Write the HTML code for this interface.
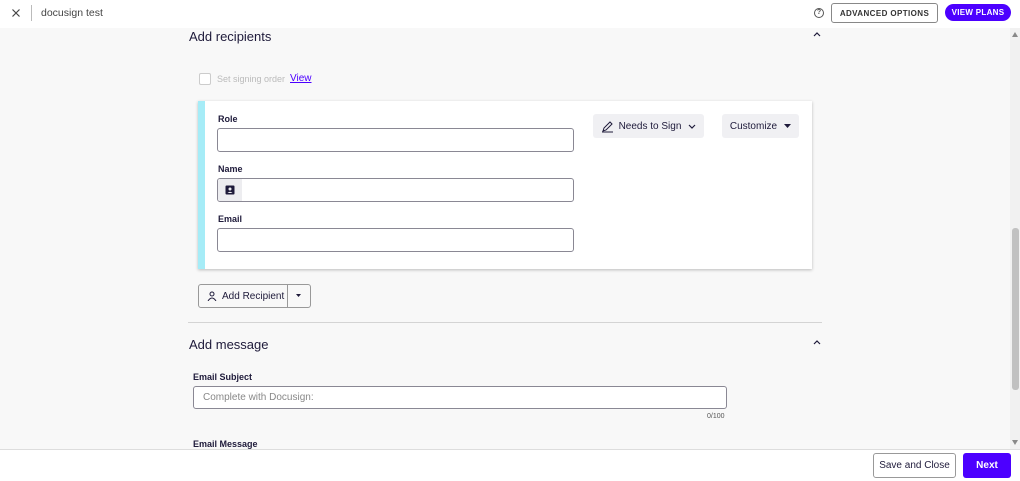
<!DOCTYPE html>
<html><head><meta charset="utf-8"><style>
*{box-sizing:border-box;margin:0;padding:0}
body{width:1020px;height:481px;overflow:hidden;font-family:"Liberation Sans",sans-serif;background:#f8f8f8;color:#1e1a3a;position:relative}
.abs{position:absolute}
.hdr{left:0;top:0;width:1020px;height:28px;background:#fff}
.ftr{left:0;top:449px;width:1020px;height:32px;background:#fff;border-top:1px solid #ddd}
.inp{position:absolute;background:#fff;border:1px solid #8a8894;border-radius:3px}
.lbl{position:absolute;font-size:9px;font-weight:600;color:#1e1a3a}
.btn{position:absolute;border-radius:3px;font-size:10px;display:flex;align-items:center;justify-content:center}
</style></head><body>
<div class="abs hdr"></div>
<svg class="abs" style="left:12px;top:9px" width="8" height="8" viewBox="0 0 8 8"><path d="M0.5 0.5 L7.5 7.5 M7.5 0.5 L0.5 7.5" stroke="#444" stroke-width="1.2"/></svg>
<div class="abs" style="left:31px;top:5px;width:1px;height:16px;background:#bbb"></div>
<div class="abs" style="left:41px;top:7px;font-size:10.5px;color:#444">docusign test</div>
<div class="abs" style="left:814px;top:8px;width:10px;height:10px;border:1.5px solid #555;border-radius:50%;font-size:7px;text-align:center;line-height:7px;font-weight:bold;color:#555">?</div>
<div class="btn" style="left:831px;top:3px;width:107px;height:20px;border:1px solid #888;background:#fff;font-size:8px;font-weight:bold;letter-spacing:.4px;color:#333">ADVANCED OPTIONS</div>
<div class="btn" style="left:945px;top:4px;width:66px;height:17px;border-radius:9px;background:#4c00ff;color:#fff;font-size:8px;font-weight:bold;letter-spacing:.3px">VIEW PLANS</div>

<div class="abs" style="left:189px;top:29px;font-size:13px">Add recipients</div>
<svg class="abs" style="left:813px;top:32px" width="8" height="5" viewBox="0 0 8 5"><path d="M1 4 L4 1 L7 4" fill="none" stroke="#1e1a3a" stroke-width="1.2"/></svg>
<div class="abs" style="left:199px;top:73px;width:12px;height:12px;border:1px solid #ccc;border-radius:2px;background:#fff"></div>
<div class="abs" style="left:217px;top:74px;font-size:9px;color:#bbb">Set signing order</div>
<div class="abs" style="left:290px;top:73px;font-size:10px;color:#4c00ff;text-decoration:underline">View</div>

<div class="abs" style="left:198px;top:101px;width:614px;height:168px;background:#fff;box-shadow:0 1px 3px rgba(0,0,0,.25)"></div>
<div class="abs" style="left:198px;top:101px;width:7px;height:168px;background:#a6ecf7"></div>
<div class="lbl" style="left:218px;top:114px">Role</div>
<div class="inp" style="left:217px;top:128px;width:357px;height:24px"></div>
<div class="lbl" style="left:218px;top:164px">Name</div>
<div class="inp" style="left:217px;top:178px;width:357px;height:24px;overflow:hidden"><div style="width:24px;height:22px;background:#ededf0;display:flex;align-items:center;justify-content:center"><svg width="10" height="10" viewBox="0 0 10 10"><rect x="0.5" y="0.5" width="9" height="9" rx="1" fill="#1e1a3a"/><circle cx="5" cy="4" r="1.5" fill="#ededf0"/><path d="M2.5 8 Q5 5.5 7.5 8 Z" fill="#ededf0"/></svg></div></div>
<div class="lbl" style="left:218px;top:214px">Email</div>
<div class="inp" style="left:217px;top:228px;width:357px;height:24px"></div>
<div class="btn" style="left:593px;top:114px;width:111px;height:24px;background:#f0f0f3;font-size:10px;color:#1e1a3a">
<svg width="13" height="13" viewBox="0 0 13 13" style="margin-right:5px"><path d="M2 11 L3 8 L9 2 L11 4 L5 10 Z M1 12 H12" fill="none" stroke="#1e1a3a" stroke-width="1"/></svg>Needs to Sign<svg width="8" height="5" viewBox="0 0 8 5" style="margin-left:7px"><path d="M1 1 L4 4 L7 1" fill="none" stroke="#1e1a3a" stroke-width="1.2"/></svg></div>
<div class="btn" style="left:722px;top:114px;width:77px;height:24px;background:#f0f0f3;font-size:10px;color:#1e1a3a">Customize<svg width="7" height="4" viewBox="0 0 7 4" style="margin-left:7px"><path d="M0 0 H7 L3.5 4 Z" fill="#1e1a3a"/></svg></div>

<div class="btn" style="left:198px;top:284px;width:113px;height:24px;border:1px solid #999;background:#f8f8f8;justify-content:flex-start;padding-left:8px;font-size:10px">
<svg width="10" height="10" viewBox="0 0 10 10" style="margin-right:5px"><circle cx="5" cy="3" r="2" fill="none" stroke="#1e1a3a"/><path d="M1 10 Q5 4 9 10" fill="none" stroke="#1e1a3a"/></svg>Add Recipient</div>
<div class="abs" style="left:287px;top:285px;width:1px;height:22px;background:#999"></div>
<svg class="abs" style="left:296px;top:294px" width="5" height="3" viewBox="0 0 5 3"><path d="M0 0 H5 L2.5 3 Z" fill="#1e1a3a"/></svg>

<div class="abs" style="left:188px;top:322px;width:634px;height:1px;background:#d4d4d4"></div>
<div class="abs" style="left:189px;top:337px;font-size:13px">Add message</div>
<svg class="abs" style="left:813px;top:340px" width="8" height="5" viewBox="0 0 8 5"><path d="M1 4 L4 1 L7 4" fill="none" stroke="#1e1a3a" stroke-width="1.2"/></svg>
<div class="lbl" style="left:193px;top:372px">Email Subject</div>
<div class="inp" style="left:193px;top:386px;width:534px;height:23px;font-size:10px;color:#888;padding:5px 9px">Complete with Docusign:</div>
<div class="abs" style="left:707px;top:413px;font-size:7px;color:#555">0/100</div>
<div class="lbl" style="left:193px;top:439px">Email Message</div>

<div class="abs" style="left:1010px;top:28px;width:10px;height:421px;background:#f1f1f1"></div>
<svg class="abs" style="left:1012px;top:32px" width="6" height="5" viewBox="0 0 6 5"><path d="M0 5 H6 L3 0 Z" fill="#888"/></svg>
<svg class="abs" style="left:1012px;top:440px" width="6" height="5" viewBox="0 0 6 5"><path d="M0 0 H6 L3 5 Z" fill="#888"/></svg>
<div class="abs" style="left:1012px;top:228px;width:7px;height:162px;background:#c1c1c1;border-radius:3px"></div>

<div class="abs ftr"></div>
<div class="btn" style="left:873px;top:453px;width:83px;height:25px;border:1px solid #999;background:#fff;font-size:10px">Save and Close</div>
<div class="btn" style="left:963px;top:453px;width:48px;height:25px;background:#4c00ff;color:#fff;font-size:10px;font-weight:bold">Next</div>
</body></html>
